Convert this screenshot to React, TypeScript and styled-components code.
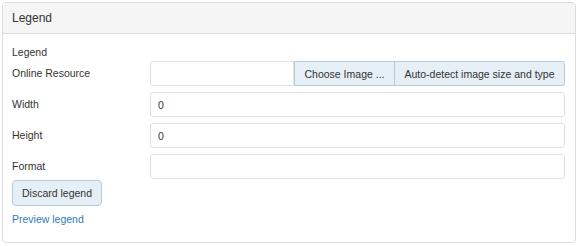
import React from 'react';
import styled, { createGlobalStyle } from 'styled-components';

const GlobalStyle = createGlobalStyle`
  body {
    margin: 0;
    background: #fff;
    color: #333;
    font-family: "Liberation Sans", Arial, sans-serif;
  }
  * {
    box-sizing: border-box;
  }
`;

const Panel = styled.div`
  margin: 2px 0 0 2px;
  width: 574px;
  border: 1px solid #dddddd;
  border-radius: 4px;
  background: #fff;
  overflow: hidden;
`;

const Heading = styled.div`
  display: flex;
  align-items: center;
  height: 31px;
  padding: 0 9px;
  background: #f5f5f5;
  border-bottom: 1px solid #dddddd;
  font-size: 12px;
  color: #333;
`;

const Body = styled.div`
  padding: 11px 10px 15px 9px;
  font-size: 10.5px;
`;

const SectionTitle = styled.div`
  line-height: 15px;
  margin-bottom: 1px;
`;

const Fields = styled.div`
  display: flex;
  flex-direction: column;
  gap: 6px;
`;

const Row = styled.div`
  display: grid;
  grid-template-columns: 138px minmax(0, 1fr);
  align-items: center;
  height: 25px;
`;

const Label = styled.label`
  line-height: 15px;
`;

const Group = styled.div`
  display: flex;
  height: 25px;
  min-width: 0;
`;

const Input = styled.input<{ $joined?: boolean }>`
  flex: 1;
  min-width: 0;
  width: 100%;
  height: 25px;
  padding: 0 7px;
  border: 1px solid #e1e1e1;
  border-radius: ${(p) => (p.$joined ? '3px 0 0 3px' : '3px')};
  font-family: inherit;
  font-size: 10.5px;
  color: #333;
  background: #fff;
  outline: none;
`;

const Button = styled.button<{ $pos?: 'mid' | 'end' }>`
  flex: none;
  height: ${(p) => (p.$pos ? '25px' : '26px')};
  padding: 0 ${(p) => (p.$pos ? '9.5px' : '9px')};
  border: 1px solid #b3cde0;
  border-radius: ${(p) =>
    p.$pos === 'mid' ? '0' : p.$pos === 'end' ? '0 3px 3px 0' : '4px'};
  margin-left: ${(p) => (p.$pos === 'end' ? '-1px' : '0')};
  background: #e6eff5;
  color: #333;
  font-family: inherit;
  font-size: 10.5px;
  white-space: nowrap;
  cursor: pointer;
`;

const Actions = styled.div`
  margin-top: 1px;
  display: flex;
`;

const Link = styled.a`
  display: block;
  margin-top: 6px;
  line-height: 15px;
  color: #337ab7;
  text-decoration: none;
`;

const App = () => {
  return (
    <>
      <GlobalStyle />
      <Panel>
        <Heading>Legend</Heading>
        <Body>
          <SectionTitle>Legend</SectionTitle>
          <Fields>
            <Row>
              <Label>Online Resource</Label>
              <Group>
                <Input $joined defaultValue="" />
                <Button $pos="mid">Choose Image ...</Button>
                <Button $pos="end">Auto-detect image size and type</Button>
              </Group>
            </Row>
            <Row>
              <Label>Width</Label>
              <Input defaultValue="0" />
            </Row>
            <Row>
              <Label>Height</Label>
              <Input defaultValue="0" />
            </Row>
            <Row>
              <Label>Format</Label>
              <Input defaultValue="" />
            </Row>
          </Fields>
          <Actions>
            <Button>Discard legend</Button>
          </Actions>
          <Link href="#">Preview legend</Link>
        </Body>
      </Panel>
    </>
  );
};

export default App;
